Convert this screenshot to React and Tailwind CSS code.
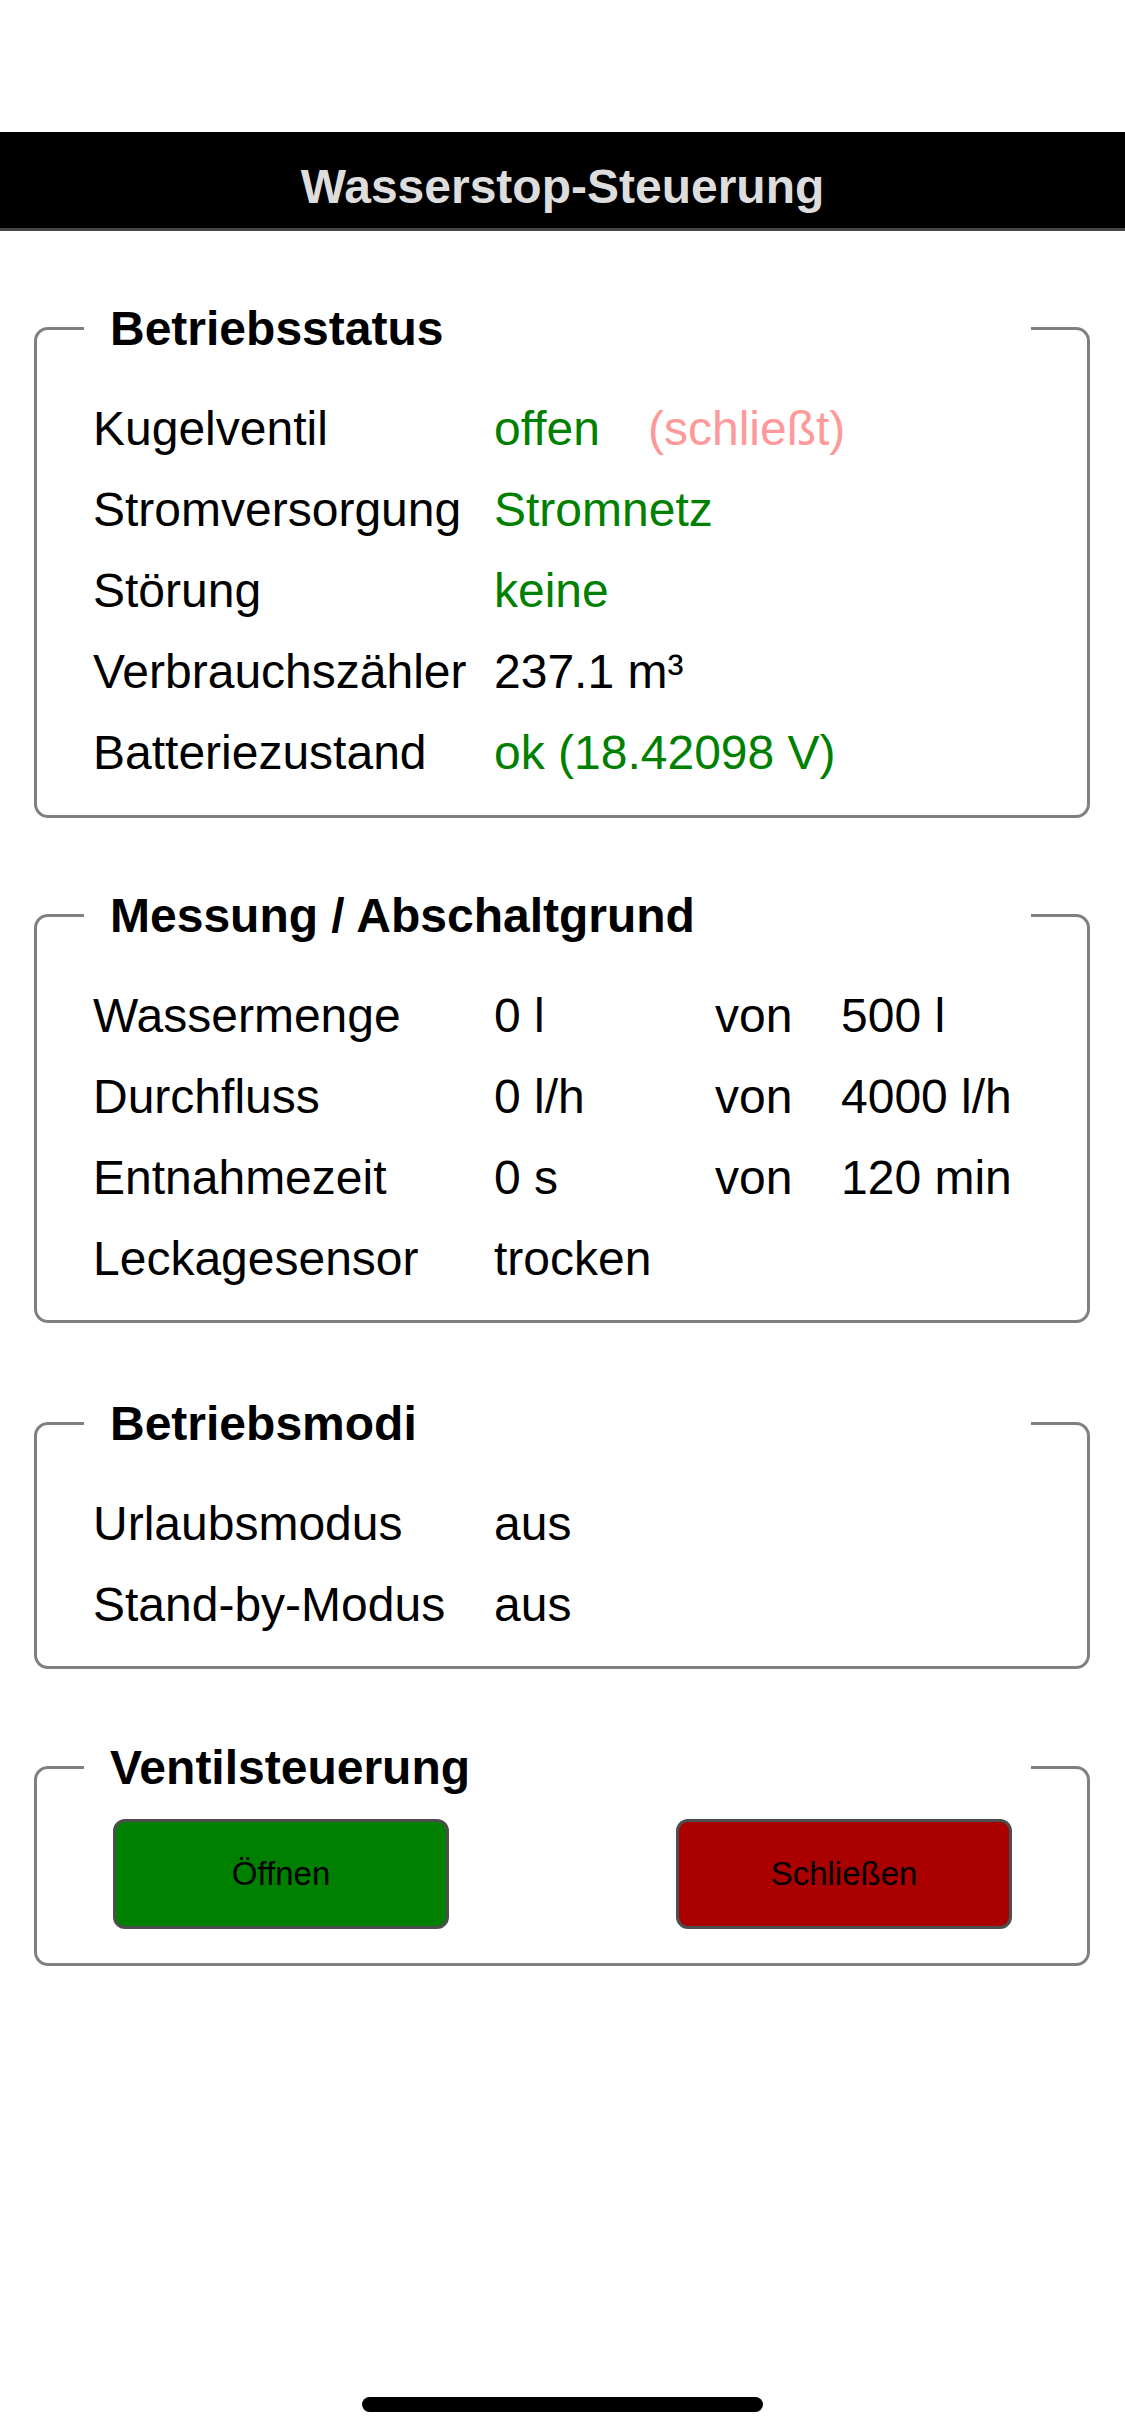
import React from "react";

const GREEN = "text-[#008000]";

function Section({ title, children, className = "", contentClass = "" }) {
  return (
    <fieldset
      className={`mx-[34px] w-[1056px] border-[3px] border-[#808080] rounded-[14px] pl-[47px] pr-[47px] ${className}`}
    >
      <legend className="w-[947px] pl-[26px] text-[48px] leading-[55px] font-bold text-black">
        {title}
      </legend>
      <div className={contentClass}>{children}</div>
    </fieldset>
  );
}

function Cell({ children, className = "" }) {
  return <div className={`h-[81px] leading-[81px] whitespace-nowrap ${className}`}>{children}</div>;
}

export default function App() {
  return (
    <div className="min-h-[2436px] w-[1125px] bg-white flex flex-col font-['Liberation_Sans',Arial,sans-serif] text-black">
      <div className="h-[132px]" />
      <header className="h-[99px] bg-black border-b-[3px] border-[#444444] text-center">
        <div className="pt-[27px] text-[48px] leading-[55px] font-bold text-[#dddddd]">
          Wasserstop-Steuerung
        </div>
      </header>

      <Section title="Betriebsstatus" className="mt-[70px]" contentClass="pt-[32px] pb-[22px]">
        <div className="ml-[9px] grid grid-cols-[401px_154px_1fr] text-[48px]">
          <Cell>Kugelventil</Cell>
          <Cell className={GREEN}>offen</Cell>
          <Cell className="text-[#ff9999]">(schließt)</Cell>

          <Cell>Stromversorgung</Cell>
          <Cell className={`${GREEN} col-span-2`}>Stromnetz</Cell>

          <Cell>Störung</Cell>
          <Cell className={`${GREEN} col-span-2`}>keine</Cell>

          <Cell>Verbrauchszähler</Cell>
          <Cell className="col-span-2">237.1 m³</Cell>

          <Cell>Batteriezustand</Cell>
          <Cell className={`${GREEN} col-span-2`}>ok (18.42098 V)</Cell>
        </div>
      </Section>

      <Section title="Messung / Abschaltgrund" className="mt-[70px]" contentClass="pt-[32px] pb-[21px]">
        <div className="ml-[9px] grid grid-cols-[401px_221px_126px_1fr] text-[48px]">
          <Cell>Wassermenge</Cell>
          <Cell>0 l</Cell>
          <Cell>von</Cell>
          <Cell>500 l</Cell>

          <Cell>Durchfluss</Cell>
          <Cell>0 l/h</Cell>
          <Cell>von</Cell>
          <Cell>4000 l/h</Cell>

          <Cell>Entnahmezeit</Cell>
          <Cell>0 s</Cell>
          <Cell>von</Cell>
          <Cell>120 min</Cell>

          <Cell>Leckagesensor</Cell>
          <Cell className="col-span-3">trocken</Cell>
        </div>
      </Section>

      <Section title="Betriebsmodi" className="mt-[73px]" contentClass="pt-[32px] pb-[21px]">
        <div className="ml-[9px] grid grid-cols-[401px_1fr] text-[48px]">
          <Cell>Urlaubsmodus</Cell>
          <Cell>aus</Cell>
          <Cell>Stand-by-Modus</Cell>
          <Cell>aus</Cell>
        </div>
      </Section>

      <Section title="Ventilsteuerung" className="mt-[71px]" contentClass="pt-[24px] pb-[34px]">
        <div className="ml-[29px] flex gap-[227px]">
          <button
            type="button"
            className="w-[336px] h-[110px] rounded-[12px] border-[3px] border-[#4d4d4d] bg-[#008000] text-black text-[33px]"
          >
            Öffnen
          </button>
          <button
            type="button"
            className="w-[336px] h-[110px] rounded-[12px] border-[3px] border-[#4d4d4d] bg-[#aa0000] text-black text-[33px]"
          >
            Schließen
          </button>
        </div>
      </Section>

      <div className="mt-auto mb-[24px] self-center w-[401px] h-[15px] rounded-full bg-black" />
    </div>
  );
}
